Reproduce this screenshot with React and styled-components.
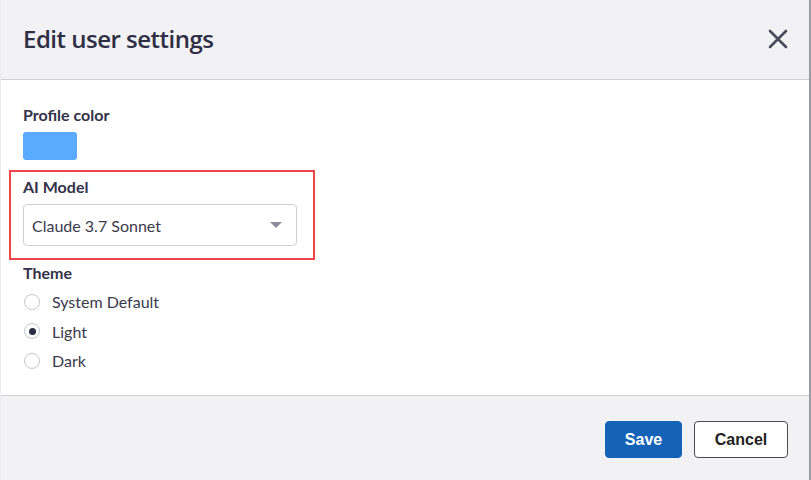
import React, { useState } from 'react'
import styled, { createGlobalStyle } from 'styled-components'

const Global = createGlobalStyle`
  body {
    margin: 0;
    background: #fff;
    font-family: Lato, "Open Sans", sans-serif;
  }
`

const Dialog = styled.div`
  width: 811px;
  height: 480px;
  display: flex;
  flex-direction: column;
  border-left: 1px solid #ececf0;
  border-right: 2px solid #9c9ca6;
  box-sizing: border-box;
`

const Header = styled.div`
  height: 80px;
  box-sizing: border-box;
  background: #f2f2f4;
  border-bottom: 1px solid #cdcdd4;
  display: flex;
  align-items: center;
  justify-content: space-between;
  padding: 0 20px 0 22px;
`

const Title = styled.h2`
  margin: 0;
  font-family: "Open Sans", Lato, sans-serif;
  font-weight: 600;
  font-size: 24px;
  letter-spacing: -0.5px;
  color: #2e2e45;
  margin-top: -2px;
`

const Close = styled.button`
  border: 0;
  background: none;
  padding: 0;
  width: 22px;
  height: 22px;
  margin-top: -2px;
  display: flex;
  align-items: center;
  justify-content: center;
  cursor: pointer;
`

const Body = styled.div`
  height: 316px;
  box-sizing: border-box;
  background: #fff;
  border-bottom: 1px solid #cdcdd4;
  padding: 25px 22px 0;
  display: flex;
  flex-direction: column;
`

const Label = styled.div`
  font-size: 16px;
  font-weight: 700;
  color: #32324a;
  line-height: 20px;
`

const Swatch = styled.div`
  width: 54px;
  height: 28px;
  border-radius: 3px;
  background: ${p => p.color};
  margin-top: 7px;
`

const Highlight = styled.div`
  margin: 10px 0 0 -14px;
  width: 306px;
  height: 90px;
  box-sizing: border-box;
  border: 2px solid #f0464a;
  padding: 5px 0 0 12px;
`

const Select = styled.div`
  margin-top: 7px;
  width: 274px;
  height: 42px;
  box-sizing: border-box;
  border: 1px solid #cfcfd6;
  border-radius: 4px;
  display: flex;
  align-items: center;
  justify-content: space-between;
  padding: 0 14px 0 8px;
  font-size: 16px;
  color: #3a3a4c;
`

const Caret = styled.span`
  width: 0;
  height: 0;
  border-left: 6px solid transparent;
  border-right: 6px solid transparent;
  border-top: 6px solid #8c8c9a;
`

const ThemeBlock = styled.div`
  margin-top: 3px;
  display: flex;
  flex-direction: column;
`

const RadioList = styled.div`
  margin-top: 4px;
`

const RadioRow = styled.label`
  display: flex;
  align-items: center;
  gap: 12px;
  height: 29.5px;
  font-size: 16px;
  color: #3a3a4c;
  cursor: pointer;
`

const RadioDot = styled.span`
  width: 16px;
  height: 16px;
  margin-left: 1px;
  border-radius: 50%;
  border: 1px solid #c6c6ce;
  box-sizing: border-box;
  display: flex;
  align-items: center;
  justify-content: center;
  background: #fff;
  &::after {
    content: '';
    width: 7px;
    height: 7px;
    border-radius: 50%;
    background: ${p => (p.checked ? '#2c2c44' : 'transparent')};
  }
`

const Footer = styled.div`
  flex: 1;
  background: #f2f2f4;
  display: flex;
  align-items: flex-start;
  justify-content: flex-end;
  gap: 12px;
  padding: 25px 21px 0 0;
`

const Button = styled.button`
  height: 37px;
  box-sizing: border-box;
  border-radius: 4px;
  font-family: "Liberation Sans", Arial, sans-serif;
  font-size: 16px;
  font-weight: 700;
  cursor: pointer;
  padding: 0;
  width: ${p => p.width}px;
  background: ${p => (p.primary ? '#1463b8' : '#fff')};
  color: ${p => (p.primary ? '#fff' : '#222')};
  border: ${p => (p.primary ? '1px solid #1463b8' : '1px solid #4a4a52')};
`

const themes = ['System Default', 'Light', 'Dark']

const App = () => {
  const [theme, setTheme] = useState('Light')

  return (
    <Dialog>
      <Global />
      <Header>
        <Title>Edit user settings</Title>
        <Close aria-label="Close">
          <svg width="20" height="20" viewBox="0 0 20 20">
            <path d="M2 2 L18 18 M18 2 L2 18" stroke="#4a4a5c" strokeWidth="2.6" strokeLinecap="round" />
          </svg>
        </Close>
      </Header>
      <Body>
        <Label>Profile color</Label>
        <Swatch color="#5aaaff" />
        <Highlight>
          <Label>AI Model</Label>
          <Select>
            Claude 3.7 Sonnet
            <Caret />
          </Select>
        </Highlight>
        <ThemeBlock>
          <Label>Theme</Label>
          <RadioList>
            {themes.map(t => (
              <RadioRow key={t} onClick={() => setTheme(t)}>
                <RadioDot checked={theme === t} />
                {t}
              </RadioRow>
            ))}
          </RadioList>
        </ThemeBlock>
      </Body>
      <Footer>
        <Button primary width={77}>Save</Button>
        <Button width={94}>Cancel</Button>
      </Footer>
    </Dialog>
  )
}

export default App
